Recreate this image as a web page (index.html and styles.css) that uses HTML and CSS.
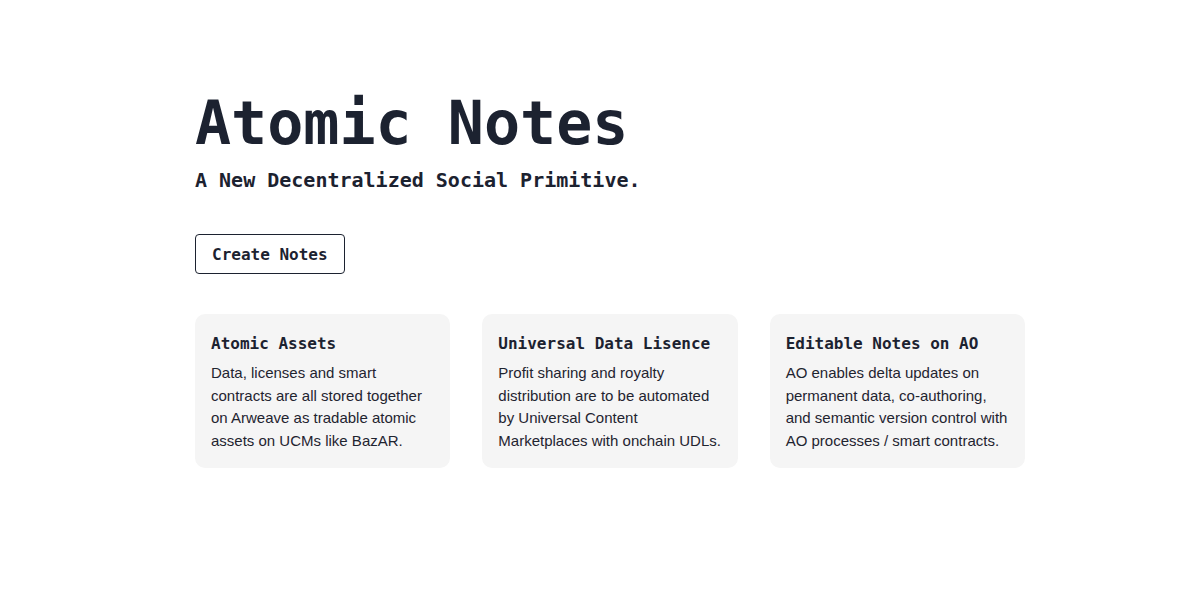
FILE: index.html
```html
<!DOCTYPE html>
<html lang="en">
<head>
<meta charset="utf-8">
<title>Atomic Notes</title>
<link rel="stylesheet" href="styles.css">
</head>
<body>
<main class="page">
  <section class="hero">
    <h1 class="title">Atomic Notes</h1>
    <p class="subtitle">A New Decentralized Social Primitive.</p>
    <button class="btn">Create Notes</button>
  </section>
  <section class="cards">
    <div class="card">
      <h3 class="card-title">Atomic Assets</h3>
      <p class="card-text">Data, licenses and smart contracts are all stored together on Arweave as tradable atomic assets on UCMs like BazAR.</p>
    </div>
    <div class="card">
      <h3 class="card-title">Universal Data Lisence</h3>
      <p class="card-text">Profit sharing and royalty distribution are to be automated by Universal Content Marketplaces with onchain UDLs.</p>
    </div>
    <div class="card">
      <h3 class="card-title">Editable Notes on AO</h3>
      <p class="card-text">AO enables delta updates on permanent data, co-authoring, and semantic version control with AO processes / smart contracts.</p>
    </div>
  </section>
</main>
</body>
</html>
```

FILE: styles.css
```css
* { box-sizing: border-box; }
html, body { margin: 0; padding: 0; background: #ffffff; }
body { color: #1c2230; font-family: "Liberation Sans", Arial, sans-serif; }
.page {
  width: 850px;
  margin: 0 auto;
  padding: 87px 0 0 20px;
}
.hero { display: flex; flex-direction: column; align-items: flex-start; }
.title {
  margin: 0;
  font-family: "DejaVu Sans Mono", "Liberation Mono", monospace;
  font-weight: 700;
  font-size: 60px;
  line-height: 72px;
  color: #1c2230;
}
.subtitle {
  margin: 7px 0 0;
  font-family: "DejaVu Sans Mono", "Liberation Mono", monospace;
  font-weight: 700;
  font-size: 20px;
  line-height: 28px;
  color: #1c2230;
}
.btn {
  margin-top: 40px;
  height: 40px;
  padding: 0 16px;
  background: #ffffff;
  border: 1px solid #1c2230;
  border-radius: 4px;
  font-family: "DejaVu Sans Mono", "Liberation Mono", monospace;
  font-weight: 700;
  font-size: 16px;
  color: #1c2230;
}
.cards {
  margin-top: 40px;
  display: grid;
  grid-template-columns: repeat(3, 1fr);
  gap: 32px;
}
.card {
  background: #f5f5f5;
  border-radius: 10px;
  padding: 18px 16px 16px;
}
.card-title {
  margin: 0;
  font-family: "DejaVu Sans Mono", "Liberation Mono", monospace;
  font-weight: 700;
  font-size: 16px;
  line-height: 24px;
  color: #1c2230;
}
.card-text {
  margin: 6px 0 0;
  font-size: 15px;
  line-height: 22.5px;
  color: #1f2430;
}
```
